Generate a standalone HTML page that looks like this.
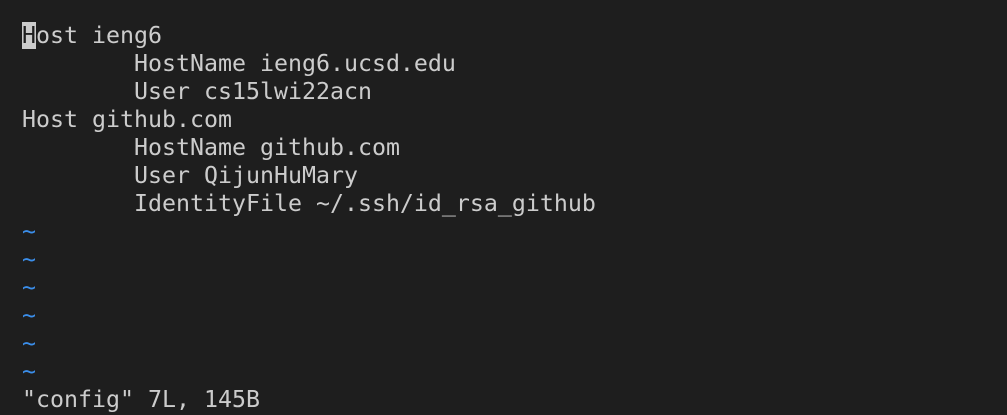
<!DOCTYPE html>
<html><head><meta charset="utf-8"><style>
html,body{margin:0;padding:0;background:#1e1e1e;width:1007px;height:415px;overflow:hidden}
pre{margin:0;position:absolute;left:22px;top:22px;font-family:"DejaVu Sans Mono","Liberation Mono",monospace;font-size:23.25px;line-height:28px;color:#cccccc}
.t{color:#3b8eea}
.c{background:#cccccc;color:#1e1e1e}
</style></head><body>
<pre><span class="c">H</span>ost ieng6
        HostName ieng6.ucsd.edu
        User cs15lwi22acn
Host github.com
        HostName github.com
        User QijunHuMary
        IdentityFile ~/.ssh/id_rsa_github
<span class="t">~</span>
<span class="t">~</span>
<span class="t">~</span>
<span class="t">~</span>
<span class="t">~</span>
<span class="t">~</span>
"config" 7L, 145B</pre>
</body></html>
